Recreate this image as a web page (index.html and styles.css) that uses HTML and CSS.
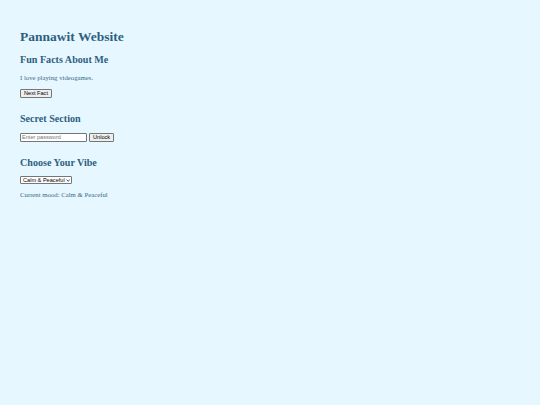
FILE: index.html
```html
<!DOCTYPE html>
<html lang="en">
<head>
<meta charset="utf-8">
<title>Pannawit Website</title>
<link rel="stylesheet" href="styles.css">
</head>
<body>
<h1 class="title">Pannawit Website</h1>
<section class="section">
  <h2 class="heading">Fun Facts About Me</h2>
  <p class="text">I love playing videogames.</p>
  <button class="btn" type="button">Next Fact</button>
</section>
<section class="section">
  <h2 class="heading">Secret Section</h2>
  <div class="row">
    <input class="field" type="password" placeholder="Enter password">
    <button class="btn" type="button">Unlock</button>
  </div>
</section>
<section class="section">
  <h2 class="heading heading-tight">Choose Your Vibe</h2>
  <div class="picker">
    <span class="picker-label">Calm &amp; Peaceful</span>
    <svg class="picker-arrow" viewBox="0 0 8 5" width="5" height="3"><path d="M1 1 L4 4 L7 1" fill="none" stroke="#222" stroke-width="1.6"/></svg>
  </div>
  <p class="text">Current mood: Calm &amp; Peaceful</p>
</section>
</body>
</html>
```
FILE: styles.css
```css
html {
  background: #e6f7ff;
}
body {
  margin: 0;
  padding: 23px 20px 0;
  font-family: "Liberation Serif", "Times New Roman", serif;
  color: #2f5f7f;
  background: #e6f7ff;
}
.title {
  font-size: 13.5px;
  line-height: 16px;
  margin: 6px 0 8px;
}
.heading {
  font-size: 10.1px;
  line-height: 12px;
  margin: 9px 0 8px;
}
.heading-tight {
  margin-bottom: 7px;
}
.text {
  font-size: 6.75px;
  line-height: 8px;
  margin: 7px 0;
  color: #3a6a88;
}
.section {
  margin-bottom: 15px;
}
.row {
  display: flex;
  gap: 2px;
}
.btn {
  display: block;
  font-family: "Liberation Sans", Arial, sans-serif;
  font-size: 5.6px;
  line-height: 7px;
  height: 9px;
  padding: 0 3px;
  color: #000;
  background: #efefef;
  border: 1px solid #767676;
  border-radius: 1px;
}
.field {
  box-sizing: border-box;
  width: 67px;
  height: 8.5px;
  margin: 0;
  padding: 0 1px;
  font-family: "Liberation Sans", Arial, sans-serif;
  font-size: 5.6px;
  background: #fff;
  border: 1px solid #767676;
  border-radius: 1px;
}
.field::placeholder {
  color: #757575;
}
.picker {
  box-sizing: border-box;
  display: flex;
  align-items: center;
  gap: 1px;
  width: 52px;
  height: 8px;
  padding: 0 1px 0 2px;
  font-family: "Liberation Sans", Arial, sans-serif;
  font-size: 5.6px;
  color: #000;
  background: #fff;
  border: 1px solid #767676;
  border-radius: 1px;
}
.picker-label {
  flex: 1;
  white-space: nowrap;
}
.picker-arrow {
  display: block;
}
```
